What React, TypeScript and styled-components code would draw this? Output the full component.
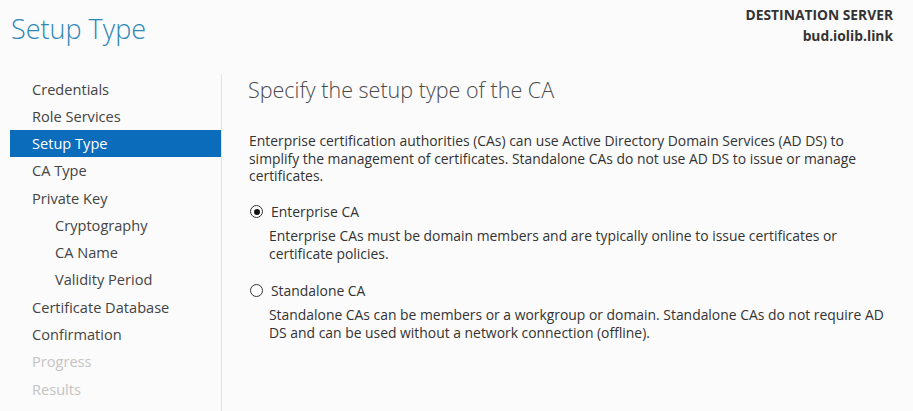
import React from "react";
import styled, { createGlobalStyle } from "styled-components";

const Global = createGlobalStyle`
  html, body { margin: 0; padding: 0; background: #fbfbfb; }
  body { font-family: "Open Sans", "Noto Sans", sans-serif; color: #333; }
`;

const Page = styled.div`
  width: 913px;
  height: 411px;
  display: flex;
  flex-direction: column;
  overflow: hidden;
  background: #fbfbfb;
`;

const Header = styled.header`
  height: 74px;
  display: flex;
  justify-content: space-between;
  align-items: flex-start;
`;

const Title = styled.h1`
  margin: 9px 0 0 11px;
  font-size: 27px;
  font-weight: 300;
  color: #2d87b8;
  line-height: 40px;
`;

const Server = styled.div`
  margin: 4px 20px 0 0;
  text-align: right;
  font-size: 13.8px;
  font-weight: 700;
  color: #333;
  line-height: 21px;
`;

const Body = styled.div`
  flex: 1;
  display: flex;
  min-height: 0;
`;

const Sidebar = styled.nav`
  width: 211px;
  margin-left: 10px;
  padding-top: 1px;
  border-right: 1px solid #e2e2e2;
`;

const NavItem = styled.div<{ $sub?: boolean; $active?: boolean; $disabled?: boolean }>`
  height: 27.27px;
  display: flex;
  align-items: center;
  padding-left: ${(p) => (p.$sub ? 45 : 22)}px;
  font-size: 14.6px;
  color: ${(p) => (p.$active ? "#fff" : p.$disabled ? "#c4c4c4" : "#444")};
  background: ${(p) => (p.$active ? "#0b6cbb" : "transparent")};
`;

const Content = styled.main`
  flex: 1;
  padding: 2px 0 0 26px;
`;

const Heading = styled.h2`
  margin: 0;
  font-size: 21.5px;
  font-weight: 300;
  color: #4a4a4a;
  line-height: 28px;
`;

const Para = styled.p`
  margin: 28px 0 0 1px;
  font-size: 13.9px;
  line-height: 17.5px;
  color: #333;
  white-space: nowrap;
`;

const Option = styled.div<{ $gap: number }>`
  margin-top: ${(p) => p.$gap}px;
`;

const RadioRow = styled.label`
  display: flex;
  align-items: center;
  gap: 8px;
  font-size: 13.9px;
  color: #333;
  line-height: 18px;
  padding-left: 2px;
`;

const Circle = styled.span<{ $checked?: boolean }>`
  width: 11px;
  height: 11px;
  border-radius: 50%;
  border: 1px solid #333;
  background: #fff;
  display: flex;
  align-items: center;
  justify-content: center;
  &::after {
    content: "";
    width: 6px;
    height: 6px;
    border-radius: 50%;
    background: ${(p) => (p.$checked ? "#111" : "transparent")};
  }
`;

const Desc = styled.p`
  margin: 6px 0 0 21px;
  font-size: 13.9px;
  line-height: 18px;
  color: #333;
  white-space: nowrap;
`;

const steps: { label: string; sub?: boolean; active?: boolean; disabled?: boolean }[] = [
  { label: "Credentials" },
  { label: "Role Services" },
  { label: "Setup Type", active: true },
  { label: "CA Type" },
  { label: "Private Key" },
  { label: "Cryptography", sub: true },
  { label: "CA Name", sub: true },
  { label: "Validity Period", sub: true },
  { label: "Certificate Database" },
  { label: "Confirmation" },
  { label: "Progress", disabled: true },
  { label: "Results", disabled: true },
];

export default function App() {
  return (
    <>
      <Global />
      <Page>
        <Header>
          <Title>Setup Type</Title>
          <Server>
            <div>DESTINATION SERVER</div>
            <div>bud.iolib.link</div>
          </Server>
        </Header>
        <Body>
          <Sidebar>
            {steps.map((s) => (
              <NavItem key={s.label} $sub={s.sub} $active={s.active} $disabled={s.disabled}>
                {s.label}
              </NavItem>
            ))}
          </Sidebar>
          <Content>
            <Heading>Specify the setup type of the CA</Heading>
            <Para>
              Enterprise certification authorities (CAs) can use Active Directory Domain Services (AD DS) to
              <br />
              simplify the management of certificates. Standalone CAs do not use AD DS to issue or manage
              <br />
              certificates.
            </Para>
            <Option $gap={18}>
              <RadioRow>
                <Circle $checked />
                Enterprise CA
              </RadioRow>
              <Desc>
                Enterprise CAs must be domain members and are typically online to issue certificates or
                <br />
                certificate policies.
              </Desc>
            </Option>
            <Option $gap={19}>
              <RadioRow>
                <Circle />
                Standalone CA
              </RadioRow>
              <Desc>
                Standalone CAs can be members or a workgroup or domain. Standalone CAs do not require AD
                <br />
                DS and can be used without a network connection (offline).
              </Desc>
            </Option>
          </Content>
        </Body>
      </Page>
    </>
  );
}
